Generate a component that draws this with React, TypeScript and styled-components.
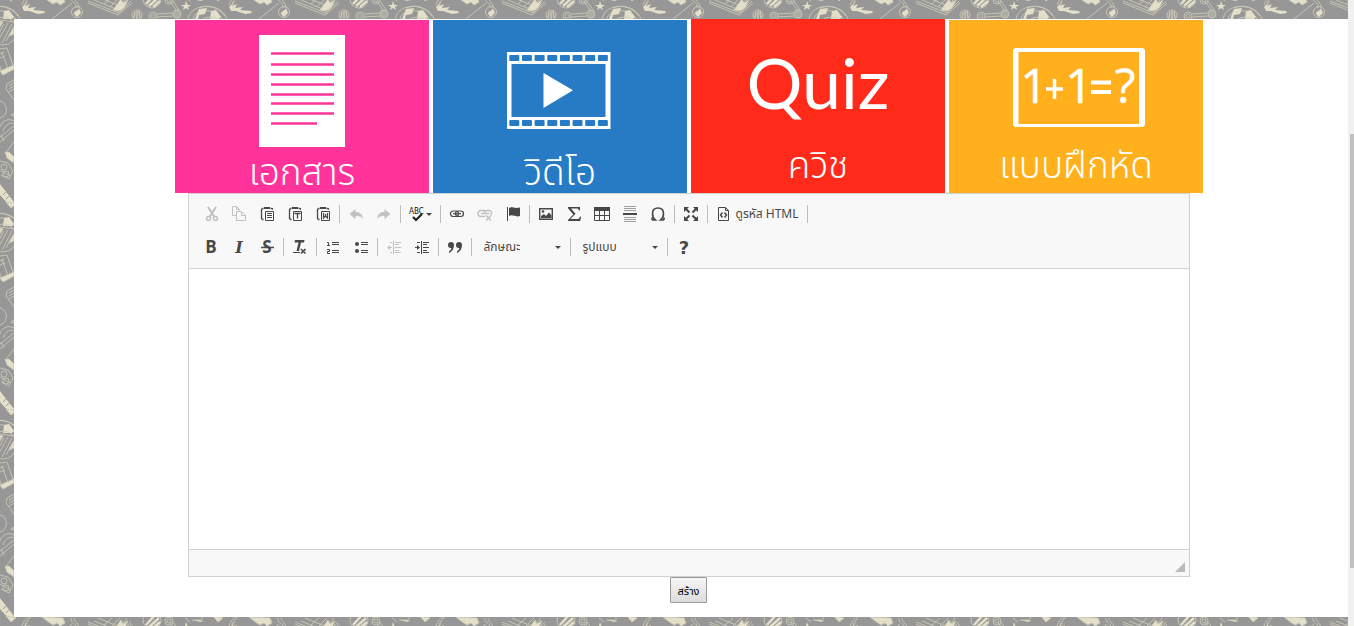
import React from 'react';
import styled, { createGlobalStyle } from 'styled-components';

const doodleTile = `<svg xmlns="http://www.w3.org/2000/svg" width="207" height="207" viewBox="0 0 207 207"><defs><g id="d" fill="none" stroke="#cbc8b4" stroke-width="0.900">
<path d="M-19 19C-16 2 14 2 20 19M-14 19C-12 8 10 8 15 19M-8 8C2 4 12 8 18 16"/>
<path d="M-12 19L-8 9L0 8L-2 14L-8 15L-9 19ZM3 19L4 11L9 10L14 17L12 19Z" fill="#e3dfc9" stroke="none"/>
<path d="M22 7L28 1L25 6L30 4L28 8L36 7L33 10L44 11L45 13L38 14L29 11L24 11Z" fill="#e3dfc9" stroke="none"/>
<path d="M42 -4L63 -3L65 2L60 5L57 2L53 4L47 0Z" fill="#e3dfc9"/>
<path d="M72 3L52 19M71 -3C70 3 77 1 76 8M74 -3C74 1 79 2 79 8"/><circle cx="77" cy="12" r="5.500"/>
<path d="M74 14C74 10 78 12 79 8L81 13L77 17Z" fill="#e3dfc9" stroke="none"/>
<path d="M88 3L118 15L132 3M88 1L119 13L131 1M94 0L118 10L127 -3M98 -3L120 6M104 4L112 -3M110 7L120 -3"/>
<path d="M113 10L121 -1L123 3L128 0L124 8L119 11Z" fill="#e3dfc9"/>
<circle cx="137" cy="15" r="5"/><path d="M134 18L135 12M137 20V11M140 18L139 11" stroke-width="1.500"/>
<circle cx="152" cy="-1" r="9"/><path d="M146 4L155 -6M149 6L159 -3M153 7L160 1" stroke-width="2.500" stroke="#e3dfc9"/>
<circle cx="153" cy="16" r="4"/><circle cx="153" cy="16" r="2"/><circle cx="177" cy="14" r="4"/><path d="M157 14L173 13M157 17L173 16M176 10L170 1M179 10L173 1M175 17V11M177 18V10M179 17V11"/><circle cx="169" cy="0" r="4"/><circle cx="169" cy="0" r="2"/>
<path d="M186 1L187.500 5H191L188 7L189 10L186 8L183 10L184 7L181 5H185Z" fill="#e3dfc9" stroke="none"/>
<path d="M185 -3L190 1M192 -1H201V1M202 -4V1M6 -5L16 -3L11 1Z" fill="#e3dfc9"/>
<path d="M25 3L32 -6M22 5C24 -1 27 -3 30 -5"/>
<circle cx="3" cy="31" r="14"/><path d="M0 20L14 22M-2 41L8 23M2 43L12 24M6 41L13 28M-2 35L4 24"/><path d="M9 36L14 27V34Z M0 21L3 22L0 27Z" fill="#e3dfc9"/>
<path d="M0 49L7 48L14 68L2 74L-2 60M2 52L8 69M0 54L4 52M0 58L5 56"/><path d="M0 71L14 65V69L3 75Z" fill="#e3dfc9"/>
<path d="M14 80L7 84L6 89L14 100M9 86L14 83M9 89L14 86M9 92L14 89"/><path d="M0 101C8 103 9 115 0 118M11 115L14 113V116Z"/>
<path d="M0 127C2 120 9 118 14 121M3 131C5 124 11 122 14 124M0 137L14 126M0 142L14 130M1 135L4 141"/>
<path d="M14 142L7 151"/><path d="M5 152L9 152L14 157V163L7 158Z" fill="#e3dfc9"/>
<path d="M0 161L8 163L13 171L9 179L1 175M0 170L10 176"/><circle cx="4" cy="167" r="3"/><circle cx="6" cy="174" r="3"/>
<path d="M0 184L14 202L12 206L9 205L0 195Z" fill="#e3dfc9" stroke="none"/><path d="M3 195L6 192M6 199L9 196" stroke="#979797"/>
</g></defs><rect width="207" height="207" fill="#979797"/><use href="#d"/><use href="#d" x="207"/><use href="#d" y="207"/></svg>`;

const GlobalStyle = createGlobalStyle`
  * { box-sizing: border-box; }
  body {
    margin: 0;
    color: #484848;
    font-family: "Noto Sans Thai", "Noto Sans", "Open Sans", sans-serif;
    font-size: 12px;
  }
`;

const Window = styled.div`
  display: flex;
  min-height: 100vh;
`;

const Backdrop = styled.div`
  flex: 1;
  min-width: 0;
  padding: 19px 0 9px 14px;
  background: #979797 url("data:image/svg+xml,${encodeURIComponent(doodleTile)}");
`;

const Panel = styled.main`
  display: flex;
  flex-direction: column;
  align-items: center;
  min-height: 100%;
  padding: 0 0 14px 15px;
  background: #fff;
`;

const ScrollTrack = styled.div`
  display: flex;
  flex-direction: column;
  width: 6px;
  padding-left: 2px;
  background: #f1f1f1;
`;
const ScrollGap = styled.div<{ $share: number }>`
  flex: ${(p) => p.$share} 0 0;
`;
const ScrollThumb = styled.div`
  flex: 434 0 0;
  background: #c1c1c1;
`;

const Tiles = styled.nav`
  display: grid;
  grid-template-columns: repeat(4, 1fr);
  gap: 4px;
  width: 100%;
  max-width: 1027px;
`;

const Tile = styled.a<{ $color: string; $full?: boolean }>`
  display: flex;
  flex-direction: column;
  align-items: center;
  height: 174px;
  border-top: ${(p) => (p.$full ? 0 : 1)}px solid #fff;
  background: ${(p) => p.$color};
  color: #fff;
  text-decoration: none;
`;

const Art = styled.svg`
  display: block;
  flex: none;
  overflow: visible;
`;

const TileLabel = styled.span`
  font-size: 37px;
  font-weight: 300;
  line-height: 44px;
  white-space: nowrap;
`;

const Editor = styled.section`
  width: 100%;
  max-width: 1002px;
  border: 1px solid #d1d1d1;
`;

const Toolbar = styled.div`
  display: flex;
  flex-direction: column;
  gap: 5px;
  padding: 6px 8px 7px;
  border-bottom: 1px solid #d1d1d1;
  background: #f8f8f8;
`;

const ToolRow = styled.div`
  display: flex;
  align-items: center;
  height: 28px;
`;

const Separator = styled.span`
  width: 1px;
  height: 18px;
  margin: 0 2px;
  background: #bcbcbc;
`;

const ToolButton = styled.button`
  display: flex;
  align-items: center;
  gap: 4px;
  height: 28px;
  padding: 0 6px;
  border: 0;
  background: none;
  color: #484848;
  font: inherit;
  white-space: nowrap;
  &:disabled { opacity: 0.3; }
`;

const Glyph = styled.svg`
  display: block;
  flex: none;
  overflow: visible;
`;

const Combo = styled.span<{ $width: number }>`
  position: relative;
  width: ${(p) => p.$width}px;
`;
const ComboSelect = styled.select`
  width: 100%;
  height: 28px;
  padding: 0 20px 0 10px;
  border: 0;
  appearance: none;
  background: none;
  color: #484848;
  font: inherit;
`;
const ComboCaret = styled.svg`
  position: absolute;
  top: 13px;
  right: 7px;
  pointer-events: none;
`;

const Content = styled.textarea`
  display: block;
  width: 100%;
  height: 280px;
  padding: 20px;
  border: 0;
  outline: 0;
  resize: none;
  font: inherit;
`;

const EditorFooter = styled.div`
  display: flex;
  justify-content: flex-end;
  align-items: flex-end;
  height: 27px;
  padding: 4px;
  border-top: 1px solid #d1d1d1;
  background: #f8f8f8;
`;

const SubmitButton = styled.button`
  width: 37px;
  height: 26px;
  padding: 2px 0 0;
  border: 1px solid #9a9a9a;
  border-radius: 1px;
  background: linear-gradient(#f6f6f6, #dcdcdc);
  color: #000;
  font: inherit;
  font-size: 11px;
`;

const Icon = ({ children, w = 16 }: { children: React.ReactNode; w?: number }) => (
  <Glyph width={w} height={16} viewBox={`0 0 ${w} 16`} fill="none" stroke="#484848" aria-hidden="true">
    {children}
  </Glyph>
);

const Clipboard = ({ children }: { children: React.ReactNode }) => (
  <Icon>
    <path d="M4.500 2.500H3.500L2.500 3.500V12.500L3.500 13.500H4.500M11.500 2.500H13L14 3.500" strokeWidth="1.300" />
    <path d="M5 1H11V3H5Z" fill="#484848" stroke="none" />
    <path d="M6.500 5.500H14.500V14.500H6.500Z" />
    {children}
  </Icon>
);

const Letter = ({ char, font, italic, size = 17, y = 14 }: { char: string; font: string; italic?: boolean; size?: number; y?: number }) => (
  <text x="8" y={y} textAnchor="middle" fill="#484848" stroke="none" fontFamily={font} fontSize={size} fontWeight="700" fontStyle={italic ? 'italic' : 'normal'}>
    {char}
  </text>
);

const icons = {
  cut: <Icon><path d="M5 1L11.500 11M13 1L6.500 11" strokeWidth="2.200" /><circle cx="5.500" cy="12.500" r="2" strokeWidth="1.500" /><circle cx="12.500" cy="12.500" r="2" strokeWidth="1.500" /></Icon>,
  copy: <Icon><path d="M5 9.500H1.500V.5H5.500L8.500 3.500V4.500M5.500 .5V3.500H8.500M5.500 5.500H10.500L14.500 9.500V14.500H5.500ZM10.500 5.500V9.500H14.500" /></Icon>,
  paste: <Clipboard><path d="M8 7.500H13M8 9.500H13M8 11.500H13" /></Clipboard>,
  pasteText: <Clipboard><path d="M8 8V7.500H13V8M10.500 7.500V12.500" strokeWidth="1.300" /></Clipboard>,
  pasteWord: <Clipboard><path d="M8.500 7V12L10.500 10L12.500 12V7M10.500 8V10" strokeWidth="1.200" /></Clipboard>,
  undo: <Icon><path d="M7.500 3L1.500 8L7.500 13V10C11 9.500 13.500 10.500 15 13C14.500 8.500 12 6 7.500 6Z" fill="#484848" stroke="none" /></Icon>,
  redo: <Icon><path d="M8.500 3L14.500 8L8.500 13V10C5 9.500 2.500 10.500 1 13C1.500 8.500 4 6 8.500 6Z" fill="#484848" stroke="none" /></Icon>,
  spell: (
    <Icon w={23}>
      <text x="0" y="8" fill="#111" stroke="none" fontFamily="DejaVu Sans Condensed, DejaVu Sans, sans-serif" fontSize="8" fontWeight="400">ABC</text>
      <path d="M4 11L7 14L13 8" stroke="#222" strokeWidth="2.200" />
      <path d="M17 7H23L20 10Z" fill="#484848" stroke="none" />
    </Icon>
  ),
  link: <Icon><rect x="1.500" y="5" width="8" height="5.500" rx="2.700" strokeWidth="1.200" /><rect x="6.500" y="5" width="8" height="5.500" rx="2.700" strokeWidth="1.200" /><path d="M4 7.700H12" strokeWidth="1.200" /></Icon>,
  unlink: <Icon><path d="M8 10.500H4A2.500 2.500 0 0 1 4 4.500H7A2.500 2.500 0 0 1 9 6M7 7.500C7 5.500 8 4.500 9.500 4.500H12A2.500 2.500 0 0 1 13.500 9M4 7.500H12" strokeWidth="1.400" /><path d="M9 9.500L14 14.500M14 9.500L9 14.500" strokeWidth="1.600" /></Icon>,
  flag: <Icon><path d="M2.500 1V15" /><path d="M4 2C7 0 9 3 15 1.500V10C10 11.500 8 8 4 10Z" fill="#484848" stroke="none" /></Icon>,
  image: <Icon><path d="M1.700 2.700H14.300V13.300H1.700Z" strokeWidth="1.400" /><path d="M3 12V10L6 8L8 10L11 6.500L13.500 9.500V12Z" fill="#484848" stroke="none" /><circle cx="5" cy="5.500" r="1.300" fill="#484848" stroke="none" /></Icon>,
  sigma: <Icon><path d="M2 1H14V4.500H13C12.700 3 12 2.500 10.500 2.500H5L9.500 7.800L4.500 13H11.500C13 13 13.500 12 14 10.500H15L14.300 15H2V14L7.300 8.500L2 2.300Z" fill="#484848" stroke="none" /></Icon>,
  table: <Icon><path d="M0 1H16V5H0Z" fill="#484848" stroke="none" /><path d="M.5 4V14.500H15.500V4M5.500 4V14.500M10.500 4V14.500M0 9.500H16" /></Icon>,
  rule: <Icon><path d="M2 .5H14M2 2.500H14M2 4.500H14M2 11.500H14M2 13.500H14M2 15.500H14" stroke="#a0a0a0" /><path d="M1 8H15" strokeWidth="2" /></Icon>,
  omega: <Icon><path d="M2 14H5.500C3 12 2.500 10 2.500 7.500C2.500 4 4.500 2 8 2S13.500 4 13.500 7.500C13.500 10 13 12 10.500 14H14M2 14V11.500M14 14V11.500" strokeWidth="1.600" /></Icon>,
  maximize: <Icon><path d="M1 1H6L1 6ZM15 1H10L15 6ZM1 15H6L1 10ZM15 15H10L15 10Z" fill="#484848" stroke="none" /><path d="M2 2L6.500 6.500M14 2L9.500 6.500M2 14L6.500 9.500M14 14L9.500 9.500" strokeWidth="2" /></Icon>,
  source: <Icon><path d="M2.500 1.500H9.500L12.500 4.500V14.500H2.500ZM9.500 1.500V4.500H12.500" /><path d="M6.500 6.500L4.500 9L6.500 11.500M8.500 6.500L10.500 9L8.500 11.500" strokeWidth="1.500" /></Icon>,
  bold: <Icon><Letter char="B" font="Open Sans, sans-serif" size={17} /></Icon>,
  italic: <Icon><Letter char="I" font="DejaVu Serif, serif" italic size={16} /></Icon>,
  strike: <Icon><Letter char="S" font="Open Sans, sans-serif" size={17} /><path d="M2 8.500H15" strokeWidth="1.500" /></Icon>,
  clear: <Icon><path d="M3 1H12.500L12 3.500H9L7 12H4.500L6.500 3.500H2.500Z" fill="#484848" stroke="none" /><path d="M1 13.500H8" /><path d="M9 10L13.500 14.500M13.500 10L9 14.500" strokeWidth="1.600" /></Icon>,
  ordered: <Icon><path d="M7 3.500H14M7 5.500H14M7 11.500H14M7 13.500H14M2 3.500H3.500V7M2 6.500H5M2 10.500H4.500V12.500H2.500V14.500H5" /></Icon>,
  bulleted: <Icon><circle cx="4" cy="5" r="2" fill="#484848" stroke="none" /><circle cx="4" cy="12" r="2" fill="#484848" stroke="none" /><path d="M8 3.500H15M8 5.500H15M8 11.500H15M8 13.500H15" /></Icon>,
  outdent: <Icon><path d="M7.500 2V15M9 3.500H15M9 5.500H13M9 8.500H15M9 11.500H13M9 13.500H15M2 8.500H6M4 3.500H6M4 13.500H6" /><path d="M4 6V11L1 8.500Z" fill="#484848" stroke="none" /></Icon>,
  indent: <Icon><path d="M7.500 2V15M9 3.500H15M9 5.500H13M9 8.500H15M9 11.500H13M9 13.500H15M1 8.500H4M3 3.500H6M3 13.500H6" /><path d="M3 6V11L6 8.500Z" fill="#484848" stroke="none" /></Icon>,
  quote: <Icon><path d="M1 6A3 3 0 1 1 7 6C7 10 5 12.500 2 14V12.500C3.500 11.500 4.300 10.300 4.300 9A3 3 0 0 1 1 6ZM9 6A3 3 0 1 1 15 6C15 10 13 12.500 10 14V12.500C11.500 11.500 12.300 10.300 12.300 9A3 3 0 0 1 9 6Z" fill="#484848" stroke="none" /></Icon>,
  help: <Icon><Letter char="?" font="DejaVu Sans, sans-serif" size={18} y={15} /></Icon>,
};

type Item = '|' | [keyof typeof icons, string, ('off' | undefined)?];

const firstRow: Item[] = [
  ['cut', 'ตัด', 'off'], ['copy', 'สำเนา', 'off'], ['paste', 'วาง'], ['pasteText', 'วางแบบตัวอักษรธรรมดา'], ['pasteWord', 'วางจาก Word'], '|',
  ['undo', 'ยกเลิกคำสั่ง', 'off'], ['redo', 'ทำซ้ำคำสั่ง', 'off'], '|',
  ['spell', 'ตรวจการสะกด'], '|',
  ['link', 'ลิงก์'], ['unlink', 'ลบลิงก์', 'off'], ['flag', 'จุดเชื่อม'], '|',
  ['image', 'รูปภาพ'], ['sigma', 'สมการ'], ['table', 'ตาราง'], ['rule', 'เส้นคั่น'], ['omega', 'อักขระพิเศษ'], '|',
  ['maximize', 'ขยายเต็มจอ'], '|',
];
const secondRow: Item[] = [
  ['bold', 'ตัวหนา'], ['italic', 'ตัวเอียง'], ['strike', 'ขีดฆ่า'], '|',
  ['clear', 'ล้างรูปแบบ'], '|',
  ['ordered', 'ลำดับเลข'], ['bulleted', 'ลำดับสัญลักษณ์'], '|',
  ['outdent', 'ลดระยะย่อหน้า', 'off'], ['indent', 'เพิ่มระยะย่อหน้า'], '|',
  ['quote', 'อ้างอิง'], '|',
];

const Tools = ({ items }: { items: Item[] }) => (
  <>
    {items.map((item, i) =>
      item === '|' ? (
        <Separator key={i} />
      ) : (
        <ToolButton key={i} type="button" aria-label={item[1]} disabled={item[2] === 'off'}>
          {icons[item[0]]}
        </ToolButton>
      ),
    )}
  </>
);

const StyleCombo = ({ label, width }: { label: string; width: number }) => (
  <Combo $width={width}>
    <ComboSelect aria-label={label}>
      <option>{label}</option>
    </ComboSelect>
    <ComboCaret width="6" height="3" viewBox="0 0 6 3" aria-hidden="true">
      <path d="M0 0H6L3 3Z" fill="#484848" />
    </ComboCaret>
  </Combo>
);

const documentLines = [33, 44, 54, 64, 74, 83, 93];
const filmHoles = [0, 1, 2, 3, 4, 5, 6, 7];

export default function App() {
  return (
    <>
      <GlobalStyle />
      <Window>
        <Backdrop>
          <Panel>
            <Tiles>
              <Tile href="#document" $color="#ff3399">
                <Art width="254" height="132" viewBox="0 0 254 132" aria-hidden="true">
                  <path d="M84 15H170V127H84Z" fill="#fff" />
                  {documentLines.map((y) => (
                    <path key={y} d={`M96 ${y + 0.5}H159`} stroke="#ff3399" strokeWidth="2.400" />
                  ))}
                  <path d="M96 103.500H142" stroke="#ff3399" strokeWidth="2.400" />
                </Art>
                <TileLabel>เอกสาร</TileLabel>
              </Tile>
              <Tile href="#video" $color="#277bc5">
                <Art width="254" height="132" viewBox="0 0 254 132" aria-hidden="true">
                  <path d="M74 32H177.500V109H74ZM78.500 44V97H172.500V44Z" fill="#fff" fillRule="evenodd" />
                  {filmHoles.map((i) => (
                    <g key={i} fill="#277bc5">
                      <rect x={76.3 + i * 12.65} y="35" width="10" height="6" rx="1" />
                      <rect x={76.3 + i * 12.65} y="100" width="10" height="6" rx="1" />
                    </g>
                  ))}
                  <path d="M110.500 53L140 70.300L110.500 88Z" fill="#fff" />
                </Art>
                <TileLabel>วิดีโอ</TileLabel>
              </Tile>
              <Tile href="#quiz" $color="#ff2a1a" $full>
                <Art width="254" height="126" viewBox="0 0 254 126" aria-hidden="true">
                  <text x="127" y="90" textAnchor="middle" fill="#fff" fontFamily="Lato, sans-serif" fontSize="70">Quiz</text>
                </Art>
                <TileLabel>ควิช</TileLabel>
              </Tile>
              <Tile href="#exercise" $color="#ffb01c">
                <Art width="254" height="125" viewBox="0 0 254 125" aria-hidden="true">
                  <path d="M66 28H194L196 30V105L194 107H66L64 105V30ZM69.500 32V104H190V32Z" fill="#fff" fillRule="evenodd" />
                  <g fill="#fff" stroke="#fff" strokeWidth="0.500" fontFamily="Open Sans, sans-serif" fontSize="48" textAnchor="middle">
                    <text x="85" y="83">1</text>
                    <text x="130" y="83">1</text>
                    <text x="176" y="83">?</text>
                  </g>
                  <path d="M97 69H114M105.500 59V79" stroke="#fff" strokeWidth="3.500" />
                  <path d="M142 62.500H162M142 72H162" stroke="#fff" strokeWidth="4" />
                </Art>
                <TileLabel>แบบฝึกหัด</TileLabel>
              </Tile>
            </Tiles>
            <Editor>
              <Toolbar role="toolbar">
                <ToolRow>
                  <Tools items={firstRow} />
                  <ToolButton type="button">
                    {icons.source}
                    ดูรหัส HTML
                  </ToolButton>
                  <Separator />
                </ToolRow>
                <ToolRow>
                  <Tools items={secondRow} />
                  <StyleCombo label="ลักษณะ" width={94} />
                  <Separator />
                  <StyleCombo label="รูปแบบ" width={92} />
                  <Separator />
                  <ToolButton type="button" aria-label="ช่วยเหลือ">{icons.help}</ToolButton>
                </ToolRow>
              </Toolbar>
              <Content aria-label="เนื้อหา" />
              <EditorFooter>
                <svg width="10" height="10" viewBox="0 0 10 10" aria-hidden="true">
                  <path d="M10 0V10H0Z" fill="#bcbcbc" />
                </svg>
              </EditorFooter>
            </Editor>
            <SubmitButton type="submit">สร้าง</SubmitButton>
          </Panel>
        </Backdrop>
        <ScrollTrack aria-hidden="true">
          <ScrollGap $share={134} />
          <ScrollThumb />
          <ScrollGap $share={58} />
        </ScrollTrack>
      </Window>
    </>
  );
}
